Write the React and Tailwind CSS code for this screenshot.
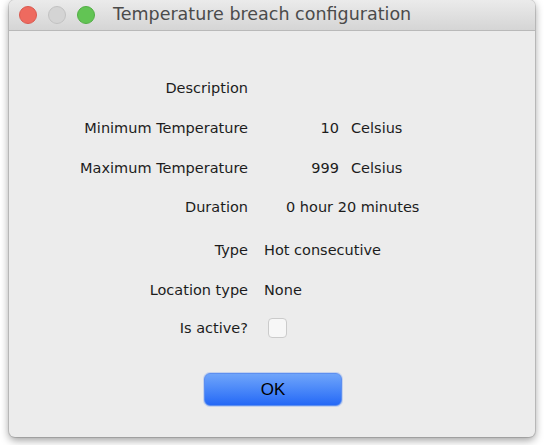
export default function App() {
  const font = { fontFamily: '"DejaVu Sans", "Liberation Sans", sans-serif' };
  return (
    <div className="w-[544px] h-[445px] bg-white overflow-hidden relative">
      <div className="ml-[9px] w-[526px] h-[437px] rounded-t-[6px] rounded-b-[6px] bg-[#ececec] shadow-[0_3px_8px_rgba(0,0,0,0.4),0_0_0_1px_rgba(0,0,0,0.12)] flex flex-col overflow-hidden">
        {/* Title bar */}
        <div className="h-[31px] shrink-0 bg-gradient-to-b from-[#ebebeb] to-[#d5d5d5] border-b border-[#b9b9b9] flex items-center">
          <div className="ml-[10px] w-[18px] h-[18px] rounded-full bg-[#ee6a5f] border border-[#d9594f]" />
          <div className="ml-[11px] w-[18px] h-[18px] rounded-full bg-[#d4d4d4] border border-[#c2c2c2]" />
          <div className="ml-[11px] w-[18px] h-[18px] rounded-full bg-[#62c454] border border-[#52ae45]" />
          <div className="ml-[18px] text-[17.5px] text-[#4b4b4b] leading-none" style={font}>
            Temperature breach configuration
          </div>
        </div>
        {/* Body */}
        <div className="flex flex-col pt-[47px] text-[14.5px] text-[#1c1c1c] leading-none" style={font}>
          <div className="h-[20px] flex items-center">
            <div className="w-[239px] text-right">Description</div>
          </div>
          <div className="h-[20px] mt-[20px] flex items-center">
            <div className="w-[239px] text-right">Minimum Temperature</div>
            <div className="w-[91px] text-right">10</div>
            <div className="ml-[12px]">Celsius</div>
          </div>
          <div className="h-[20px] mt-[20px] flex items-center">
            <div className="w-[239px] text-right">Maximum Temperature</div>
            <div className="w-[91px] text-right">999</div>
            <div className="ml-[12px]">Celsius</div>
          </div>
          <div className="h-[20px] mt-[19px] flex items-center">
            <div className="w-[239px] text-right">Duration</div>
            <div className="ml-[38px]">0 hour 20 minutes</div>
          </div>
          <div className="h-[20px] mt-[23px] flex items-center">
            <div className="w-[239px] text-right">Type</div>
            <div className="ml-[16px]">Hot consecutive</div>
          </div>
          <div className="h-[20px] mt-[20px] flex items-center">
            <div className="w-[239px] text-right">Location type</div>
            <div className="ml-[16px]">None</div>
          </div>
          <div className="h-[20px] mt-[18px] flex items-center">
            <div className="w-[239px] text-right">Is active?</div>
            <div className="ml-[20px] w-[19px] h-[20px] rounded-[4px] bg-[#f7f7f7] border border-[#cbcbcb]" />
          </div>
          <div className="mt-[35px] flex">
            <div className="ml-[195px] w-[138px] h-[33px] rounded-[6px] bg-gradient-to-b from-[#6fa4fa] to-[#2468f6] border border-[#5d8ff0] shadow-[0_0_0_1px_rgba(120,160,240,0.35)] flex items-center justify-center">
              <span className="text-[17px] text-black leading-none" style={{ fontFamily: '"Liberation Sans", Arial, sans-serif' }}>OK</span>
            </div>
          </div>
        </div>
      </div>
    </div>
  );
}
